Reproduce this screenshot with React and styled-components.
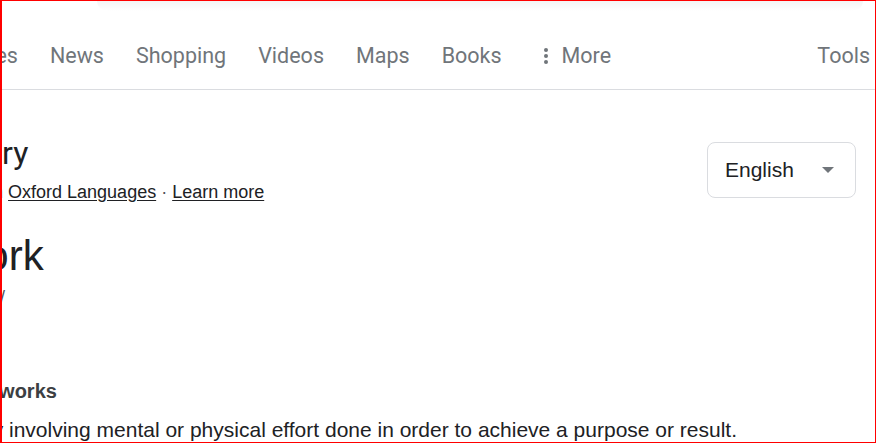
import React from "react";
import styled, { createGlobalStyle } from "styled-components";

const GlobalStyle = createGlobalStyle`
  html, body {
    margin: 0;
    padding: 0;
    background: #ffffff;
  }
  body {
    font-family: "Liberation Sans", Arial, sans-serif;
    color: #202124;
  }
`;

const Frame = styled.div`
  box-sizing: border-box;
  width: 876px;
  height: 443px;
  border-style: solid;
  border-color: #ff0000;
  border-width: 1px 1px 1px 2px;
  overflow: hidden;
  background: #ffffff;
  display: flex;
  flex-direction: column;
`;

const Header = styled.header`
  border-bottom: 1px solid #dadce0;
  flex: none;
`;

const HeaderShadow = styled.div`
  height: 10px;
  margin: 0 12px 0 95px;
  border-radius: 0 0 40px 40px;
  background: linear-gradient(to bottom, rgba(0, 0, 0, 0.045), rgba(0, 0, 0, 0));
`;

const Tabs = styled.nav`
  display: flex;
  align-items: center;
  gap: 32px;
  margin-left: -55px;
  padding: 32px 5px 20px 0;
  font-family: Roboto, "Open Sans", sans-serif;
  font-size: 21.5px;
  line-height: 26px;
  color: #70757a;
  white-space: nowrap;
`;

const Tab = styled.span`
  display: inline-flex;
  align-items: center;
  gap: 4px;
  margin-left: ${(p) => (p.$push ? "auto" : "0")};
`;

const Main = styled.main`
  display: flex;
  flex-direction: column;
  white-space: nowrap;
`;

const TopRow = styled.div`
  display: flex;
  justify-content: space-between;
  align-items: flex-start;
  margin-top: 45px;
  padding-right: 19px;
`;

const TitleBlock = styled.div`
  display: flex;
  flex-direction: column;
`;

const CardTitle = styled.h2`
  margin: 0 0 0 ${(p) => p.$shift}px;
  font-family: Roboto, "Liberation Sans", sans-serif;
  font-weight: 400;
  font-size: 32px;
  line-height: 36px;
  color: #202124;
`;

const Source = styled.div`
  margin: 9px 0 0 ${(p) => p.$shift}px;
  font-size: 18px;
  line-height: 24px;
  color: #202124;
`;

const SourceLink = styled.a`
  color: #202124;
  text-decoration: underline;
  text-underline-offset: 2px;
`;

const Dot = styled.span`
  color: #4d5156;
`;

const LangSelect = styled.div`
  box-sizing: border-box;
  width: 149px;
  height: 56px;
  margin-top: 7px;
  display: flex;
  align-items: center;
  justify-content: space-between;
  padding: 0 21px 0 17px;
  border: 1px solid #dadce0;
  border-radius: 8px;
  font-size: 21px;
  color: #202124;
`;

const HeadWord = styled.div`
  margin: 28px 0 0 ${(p) => p.$shift}px;
  font-size: 42px;
  line-height: 48px;
  color: #202124;
`;

const Phonetic = styled.div`
  margin: 5px 0 0 ${(p) => p.$shift}px;
  font-size: 18px;
  line-height: 24px;
  color: #4d5156;
`;

const Forms = styled.div`
  margin: 70px 0 0 ${(p) => p.$shift}px;
  font-size: 20px;
  line-height: 24px;
  color: #3c4043;
`;

const FormWord = styled.b`
  font-weight: 700;
`;

const Definition = styled.div`
  margin: 13px 0 0 ${(p) => p.$shift}px;
  font-size: 21px;
  line-height: 28px;
  color: #202124;
`;

const MoreIcon = () => (
  <svg width="24" height="24" viewBox="0 0 24 24" aria-hidden="true">
    <circle cx="12" cy="6" r="2" fill="#70757a" />
    <circle cx="12" cy="12" r="2" fill="#70757a" />
    <circle cx="12" cy="18" r="2" fill="#70757a" />
  </svg>
);

const CaretDown = () => (
  <svg width="12" height="6" viewBox="0 0 12 6" aria-hidden="true">
    <path d="M0 0 L12 0 L6 6 Z" fill="#70757a" />
  </svg>
);

export default function App() {
  return (
    <>
      <GlobalStyle />
      <Frame>
        <Header>
          <HeaderShadow />
          <Tabs>
            <Tab>Images</Tab>
            <Tab>News</Tab>
            <Tab>Shopping</Tab>
            <Tab>Videos</Tab>
            <Tab>Maps</Tab>
            <Tab>Books</Tab>
            <Tab>
              <MoreIcon />
              More
            </Tab>
            <Tab $push>Tools</Tab>
          </Tabs>
        </Header>
        <Main>
          <TopRow>
            <TitleBlock>
              <CardTitle $shift={-117}>Dictionary</CardTitle>
              <Source $shift={-124}>
                Definitions from <SourceLink>Oxford Languages</SourceLink>
                <Dot> · </Dot>
                <SourceLink>Learn more</SourceLink>
              </Source>
            </TitleBlock>
            <LangSelect>
              <span>English</span>
              <CaretDown />
            </LangSelect>
          </TopRow>
          <HeadWord $shift={-47}>work</HeadWord>
          <Phonetic $shift={-45}>/wərk/</Phonetic>
          <Forms $shift={-113}>
            plural noun: <FormWord>works</FormWord>
          </Forms>
          <Definition $shift={-63}>
            activity involving mental or physical effort done in order to achieve a purpose or result.
          </Definition>
        </Main>
      </Frame>
    </>
  );
}
